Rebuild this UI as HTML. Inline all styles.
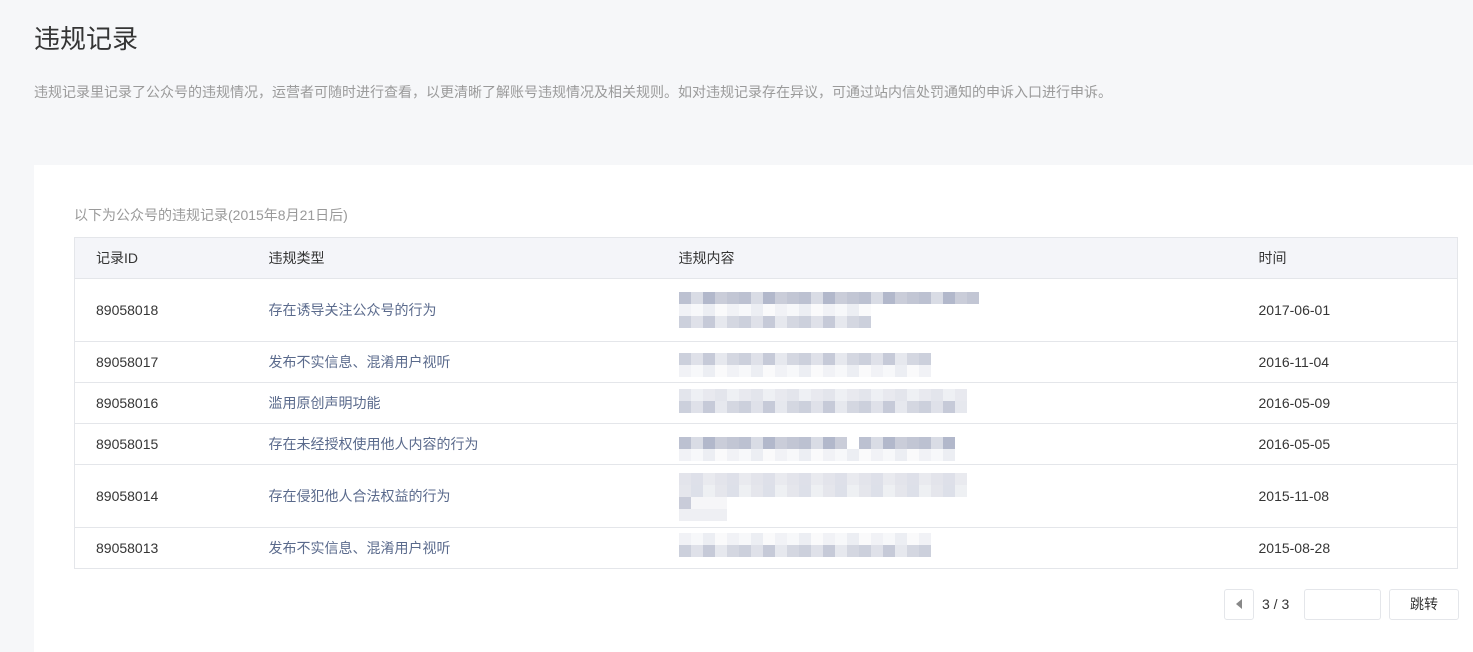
<!DOCTYPE html>
<html><head><meta charset="utf-8"><style>
*{margin:0;padding:0;box-sizing:border-box}
body{width:1473px;height:652px;overflow:hidden;background:#f6f7f9;font-family:"Liberation Sans","Noto Sans CJK SC",sans-serif;position:relative}
.t{position:absolute;left:34px;top:19px;font-size:26px;color:#353535}
.d{position:absolute;left:34px;top:82px;font-size:14px;color:#9a9a9a}
.card{position:absolute;left:34px;top:165px;right:0;bottom:0;background:#fff}
.cap{position:absolute;left:74px;top:205px;font-size:14px;color:#9a9a9a}
table{position:absolute;left:74px;top:237px;width:1384px;border-collapse:collapse;border:1px solid #e4e6ea;font-size:14px}
th{background:#f4f5f9;height:41px;text-align:left;font-weight:normal;color:#353535;border-bottom:1px solid #e4e6ea}
td{border-bottom:1px solid #e4e6ea;color:#353535;position:relative}
td.ty{color:#5a6a8c}
th:first-child,td:first-child{padding-left:21px}
.mz{position:absolute;left:679px;height:12px}
.m{background:repeating-linear-gradient(90deg,#ccd0dc 0 12px,#dfe1e9 12px 24px,#c6cad8 24px 36px,#e6e8ee 36px 48px,#d4d7e1 48px 60px)}
.l{background:repeating-linear-gradient(90deg,#f1f2f6 0 12px,#f7f8fa 12px 24px,#eceef3 24px 36px,#fafafb 36px 48px)}
.k{background:repeating-linear-gradient(90deg,#bcc1d1 0 12px,#d9dce5 12px 24px,#b2b8cb 24px 36px,#cacdd9 36px 48px,#c2c6d4 48px 60px)}
.pg{position:absolute;top:589px;height:31px;border:1px solid #e4e6ea;border-radius:3px;background:#fff;font-size:14px;color:#353535;text-align:center;line-height:29px}
</style></head><body>
<div class="t">违规记录</div>
<div class="d">违规记录里记录了公众号的违规情况，运营者可随时进行查看，以更清晰了解账号违规情况及相关规则。如对违规记录存在异议，可通过站内信处罚通知的申诉入口进行申诉。</div>
<div class="card"></div>
<div class="cap">以下为公众号的违规记录(2015年8月21日后)</div>
<table>
<tr><th style="width:194px">记录ID</th><th style="width:410px">违规类型</th><th style="width:580px">违规内容</th><th>时间</th></tr>
<tr style="height:63px"><td>89058018</td><td class="ty">存在诱导关注公众号的行为</td><td></td><td>2017-06-01</td></tr>
<tr style="height:41px"><td>89058017</td><td class="ty">发布不实信息、混淆用户视听</td><td></td><td>2016-11-04</td></tr>
<tr style="height:41px"><td>89058016</td><td class="ty">滥用原创声明功能</td><td></td><td>2016-05-09</td></tr>
<tr style="height:41px"><td>89058015</td><td class="ty">存在未经授权使用他人内容的行为</td><td></td><td>2016-05-05</td></tr>
<tr style="height:63px"><td>89058014</td><td class="ty">存在侵犯他人合法权益的行为</td><td></td><td>2015-11-08</td></tr>
<tr style="height:41px"><td>89058013</td><td class="ty">发布不实信息、混淆用户视听</td><td></td><td>2015-08-28</td></tr>
</table>
<div class="mz k" style="top:292px;width:300px"></div>
<div class="mz l" style="top:304px;width:192px"></div>
<div class="mz m" style="top:316px;width:192px"></div>
<div class="mz m" style="top:353px;width:252px"></div>
<div class="mz l" style="top:365px;width:252px"></div>
<div class="mz l" style="top:389px;width:288px;background:repeating-linear-gradient(90deg,#e3e5ec 0 12px,#eef0f4 12px 24px,#e8e9ef 24px 36px)"></div>
<div class="mz m" style="top:401px;width:288px"></div>
<div class="mz k" style="top:437px;width:168px"></div>
<div class="mz k" style="top:437px;left:859px;width:96px"></div>
<div class="mz l" style="top:449px;width:276px"></div>
<div class="mz" style="top:473px;width:288px;background:repeating-linear-gradient(90deg,#e3e4eb 0 12px,#dee0e9 12px 24px,#e9eaef 24px 36px)"></div>
<div class="mz" style="top:485px;width:288px;background:repeating-linear-gradient(90deg,#e5e6ec 0 12px,#dde0e9 12px 24px,#eef0f3 24px 36px)"></div>
<div class="mz" style="top:497px;width:48px;background:linear-gradient(90deg,#c9ccd9 0 12px,#f6f6f8 12px)"></div>
<div class="mz" style="top:509px;width:48px;background:#eeeff3"></div>
<div class="mz l" style="top:533px;width:252px"></div>
<div class="mz m" style="top:545px;width:252px"></div>
<div class="pg" style="left:1224px;width:30px"><span style="display:inline-block;width:0;height:0;border-top:5px solid transparent;border-bottom:5px solid transparent;border-right:6px solid #888;vertical-align:middle;margin-top:-2px"></span></div>
<div style="position:absolute;left:1262px;top:596px;font-size:14px;color:#353535">3 / 3</div>
<div class="pg" style="left:1304px;width:77px"></div>
<div class="pg" style="left:1389px;width:70px">跳转</div>
</body></html>
